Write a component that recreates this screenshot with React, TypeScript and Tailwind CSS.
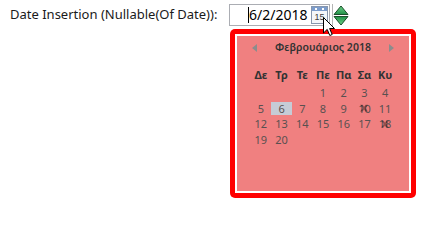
import React from "react";

const dayNames = ["Δε", "Τρ", "Τε", "Πε", "Πα", "Σα", "Κυ"];

// February 2018 starts on a Thursday; the calendar shows up to the 20th
const days: (number | null)[] = [
  null, null, null, 1, 2, 3, 4,
  5, 6, 7, 8, 9, 10, 11,
  12, 13, 14, 15, 16, 17, 18,
  19, 20, null, null, null, null, null,
];

const blackout = [10, 18];

const BlackoutX = () => (
  <svg
    className="absolute left-1/2 top-1/2 -translate-x-1/2 -translate-y-1/2"
    width="9"
    height="8"
    viewBox="7.6 10.5 8 7"
  >
    <path
      d="M8.18 11.03 L10.43 11.03 L11.7 12.8 L12.97 11.03 L15.19 11.03 L12.84 14 L15.22 17.06 L12.96 17.06 L11.67 15.26 L10.35 17.06 L8.14 17.06 L10.52 14.04 Z"
      fill="#000"
      fillOpacity="0.38"
    />
  </svg>
);

const CalendarIcon = () => (
  <div className="w-[17px] h-[18px] border border-[#8796ad] bg-[#f4f6f9] flex flex-col">
    <div className="h-[4px] bg-[#7b9ccc] flex items-center justify-center gap-[5px]">
      <span className="w-[2px] h-[2px] bg-white" />
      <span className="w-[2px] h-[2px] bg-white" />
    </div>
    <div className="flex-1 flex items-center justify-center text-[9px] leading-none text-[#3b3b3b] font-['Liberation_Sans',sans-serif]">
      15
    </div>
  </div>
);

const Spinner = () => (
  <div className="h-[22px] w-[17px] flex items-center justify-center border-l border-[#b5b5b5]">
    <svg width="16" height="21" viewBox="0 0 16 21">
      <defs>
        <linearGradient id="up" x1="0" y1="0" x2="0" y2="1">
          <stop offset="0" stopColor="#6fd38a" />
          <stop offset="1" stopColor="#1f8f45" />
        </linearGradient>
        <linearGradient id="down" x1="0" y1="0" x2="0" y2="1">
          <stop offset="0" stopColor="#1f8f45" />
          <stop offset="1" stopColor="#6fd38a" />
        </linearGradient>
      </defs>
      <path d="M8 1 L15 9.5 L1 9.5 Z" fill="url(#up)" stroke="#1b4d2a" strokeWidth="1" strokeLinejoin="round" />
      <path d="M1 11.5 L15 11.5 L8 20 Z" fill="url(#down)" stroke="#1b4d2a" strokeWidth="1" strokeLinejoin="round" />
    </svg>
  </div>
);

const Cursor = () => (
  <svg className="absolute left-[323px] top-[17px]" width="13" height="20" viewBox="0 0 13 20">
    <path
      d="M0.5 0.5 L0.5 16 L4.2 12.4 L6.8 18.5 L9.2 17.5 L6.6 11.5 L11.5 11.5 Z"
      fill="#fff"
      stroke="#000"
      strokeWidth="1"
      strokeLinejoin="round"
    />
  </svg>
);

export default function App() {
  return (
    <div className="relative w-[422px] h-[203px] bg-white overflow-hidden font-['Noto_Sans',sans-serif]">
      <div className="flex pt-[4px]">
        {/* Label */}
        <div className="w-[229px] h-[22px] pl-[10px] flex items-center text-[13px] text-[#1a1a1a] whitespace-nowrap">
          Date Insertion (Nullable(Of Date)):
        </div>

        <div className="flex flex-col">
          {/* Date box with picker button and spinner */}
          <div className="flex items-center h-[22px]">
            <div className="w-[101px] h-[22px] border border-[#abadb3] bg-white flex items-center pl-[18px] pr-[1px]">
              <span className="w-px h-[16px] bg-black" />
              <span className="text-[14px] leading-none text-black">6/2/2018</span>
              <div className="ml-auto">
                <CalendarIcon />
              </div>
            </div>
            <div className="ml-[2px]">
              <Spinner />
            </div>
          </div>

          {/* Calendar popup */}
          <div className="mt-[3px] ml-[1px] w-[186px] h-[169px] rounded-[5px] bg-[#ff0000] p-[5px]">
            <div className="h-full border-2 border-white bg-[#f08080] flex flex-col">
              <div className="mt-[4px] h-[16px] px-[15px] flex items-center justify-between">
                <span className="w-0 h-0 border-y-[4px] border-y-transparent border-r-[5px] border-r-[#8c8c8c]" />
                <span className="text-[10.5px] font-semibold text-[#333]">Φεβρουάριος 2018</span>
                <span className="w-0 h-0 border-y-[4px] border-y-transparent border-l-[5px] border-l-[#8c8c8c]" />
              </div>

              <div className="mt-[11px] mx-auto w-[145px] grid grid-cols-7">
                {dayNames.map((d) => (
                  <div key={d} className="h-[16px] flex items-center justify-center text-[11px] font-bold text-[#333]">
                    {d}
                  </div>
                ))}
              </div>

              <div className="mt-[2px] mx-auto w-[145px] grid grid-cols-7">
                {days.map((d, i) => (
                  <div key={i} className="relative h-[15.5px] flex items-center justify-center">
                    {d === 6 && <span className="absolute inset-x-0 top-[1px] h-[13px] bg-[#c6ccd6]" />}
                    {d !== null && (
                      <span className="relative text-[11px] leading-none text-[#595050]">{d}</span>
                    )}
                    {d !== null && blackout.includes(d) && <BlackoutX />}
                  </div>
                ))}
              </div>
            </div>
          </div>
        </div>
      </div>

      <Cursor />
    </div>
  );
}
